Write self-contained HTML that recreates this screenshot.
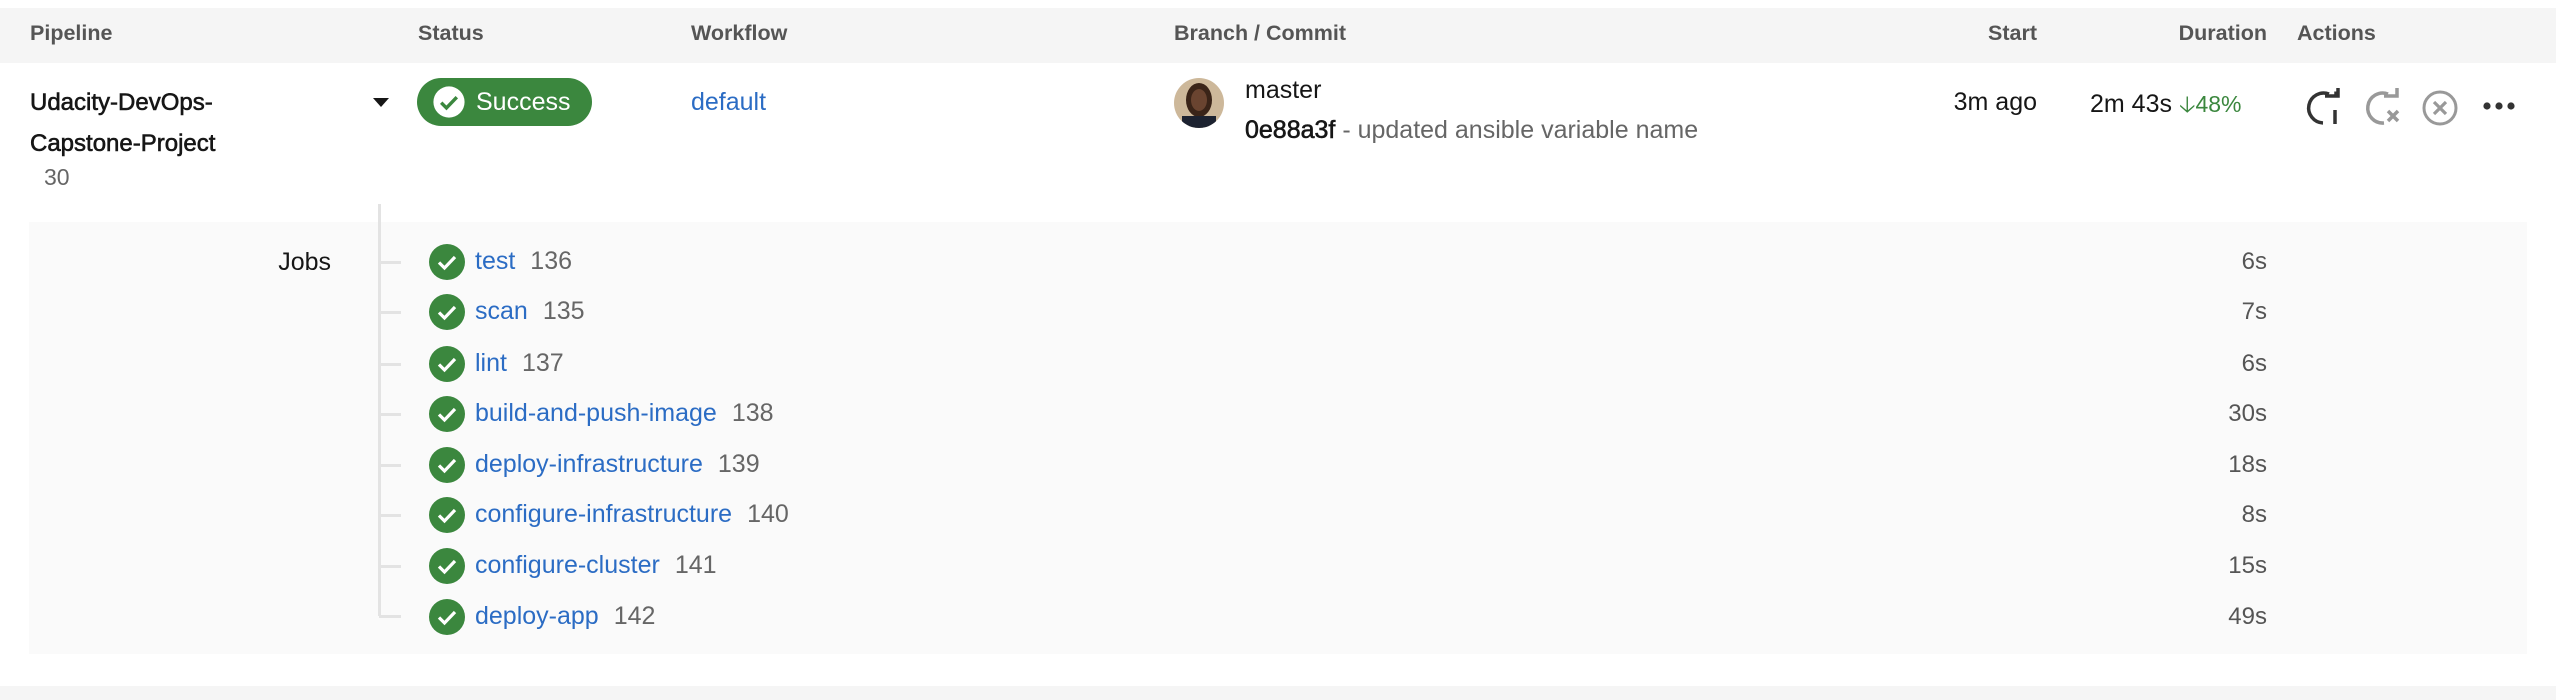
<!DOCTYPE html>
<html><head><meta charset="utf-8"><style>
*{margin:0;padding:0;box-sizing:border-box}
body{width:2556px;height:700px;background:#fff;font-family:"Liberation Sans",sans-serif;position:relative;overflow:hidden;color:#161616}
.a{position:absolute;white-space:nowrap}
.h{font-weight:bold;font-size:21.5px;color:#555;top:21px}
.blue{color:#2b6cc4}
.gray{color:#666}
.med{-webkit-text-stroke:0.6px currentColor}
.job{font-size:25px;left:475px}
.job span{color:#666;margin-left:15px}
.dur{font-size:24px;color:#555;right:289px;text-align:right}
.chk{position:absolute;left:429px;width:36px;height:36px}
.tick{position:absolute;left:379px;width:22px;height:3px;background:#e3e3e3}
</style></head><body>
<div class="a" style="left:0;top:8px;width:2556px;height:55px;background:#f5f5f5"></div>
<div class="a h" style="left:30px">Pipeline</div>
<div class="a h" style="left:418px">Status</div>
<div class="a h" style="left:691px">Workflow</div>
<div class="a h" style="left:1174px">Branch / Commit</div>
<div class="a h" style="right:519px">Start</div>
<div class="a h" style="right:289px">Duration</div>
<div class="a h" style="left:2297px">Actions</div>

<div class="a med" style="left:30px;top:82px;font-size:24px;line-height:41px">Udacity-DevOps-<br>Capstone-Project</div>
<div class="a gray" style="left:44px;top:164px;font-size:23px">30</div>
<div class="a" style="left:373px;top:98px;width:0;height:0;border-left:8px solid transparent;border-right:8px solid transparent;border-top:9px solid #161616"></div>

<div class="a" style="left:417px;top:78px;width:175px;height:48px;border-radius:24px;background:#3b873e"></div>
<svg class="a" style="left:432px;top:85px" width="34" height="34" viewBox="0 0 24 24"><circle cx="12" cy="12" r="11" fill="#fff"/><path d="M6.5 12.5l3.7 3.7 7.3-7.6" stroke="#3b873e" stroke-width="2.4" fill="none"/></svg>
<div class="a" style="left:476px;top:88px;font-size:25px;color:#fff">Success</div>

<div class="a blue" style="left:691px;top:88px;font-size:25px">default</div>

<svg class="a" style="left:1174px;top:78px" width="50" height="50"><defs><clipPath id="c"><circle cx="25" cy="25" r="25"/></clipPath></defs><g clip-path="url(#c)"><rect width="50" height="50" fill="#cdb89a"/><ellipse cx="25" cy="22" rx="13" ry="17" fill="#3a2418"/><ellipse cx="25" cy="22" rx="8" ry="11" fill="#6a4430"/><rect x="8" y="38" width="34" height="14" fill="#1c2230"/></g></svg>
<div class="a" style="left:1245px;top:76px;font-size:25px">master</div>
<div class="a" style="left:1245px;top:116px;font-size:25px"><span class="med">0e88a3f</span><span class="gray"> - updated ansible variable name</span></div>

<div class="a" style="right:519px;top:88px;font-size:25px">3m ago</div>
<div class="a" style="left:2090px;top:88px;font-size:25px">2m 43s <span style="color:#3b873e;font-size:23px">&#129123;48%</span></div>

<svg class="a" style="left:2305px;top:88px" width="40" height="38" viewBox="0 0 40 38"><path d="M24 6A15 15 0 1 0 18 35" stroke="#333" stroke-width="3.5" fill="none"/><path d="M20 8H33V-3" stroke="#333" stroke-width="3.5" fill="none"/><path d="M31 3.5V8" stroke="#333" stroke-width="3.5"/><path d="M30 22V36" stroke="#333" stroke-width="3.5"/></svg>
<svg class="a" style="left:2364px;top:88px" width="40" height="38" viewBox="0 0 40 38"><path d="M24 6A15 15 0 1 0 20 35" stroke="#999" stroke-width="3.5" fill="none"/><path d="M20 8H33V-3" stroke="#999" stroke-width="3.5" fill="none"/><path d="M24 23l10 10M34 23l-10 10" stroke="#999" stroke-width="3.5"/></svg>
<svg class="a" style="left:2422px;top:90px" width="38" height="36" viewBox="0 0 38 36"><circle cx="18" cy="18" r="16" stroke="#999" stroke-width="3" fill="none"/><path d="M12 12l12 12M24 12l-12 12" stroke="#999" stroke-width="3.2"/></svg>
<svg class="a" style="left:2483px;top:101px" width="32" height="10"><circle cx="4" cy="5" r="3.6" fill="#333"/><circle cx="16" cy="5" r="3.6" fill="#333"/><circle cx="28" cy="5" r="3.6" fill="#333"/></svg>

<div class="a" style="left:29px;top:222px;width:2498px;height:432px;background:#fafafa"></div>
<div class="a" style="left:378px;top:204px;width:3px;height:412px;background:#e3e3e3"></div>
<div class="a" style="right:2225px;top:248px;font-size:25px">Jobs</div>

<div class="tick" style="top:261px"></div>
<div class="tick" style="top:311px"></div>
<div class="tick" style="top:363px"></div>
<div class="tick" style="top:413px"></div>
<div class="tick" style="top:464px"></div>
<div class="tick" style="top:514px"></div>
<div class="tick" style="top:565px"></div>
<div class="tick" style="top:615px"></div>

<svg width="0" height="0" style="position:absolute"><defs><g id="k"><circle cx="18" cy="18" r="18" fill="#3b873e"/><path d="M10 18.5l5.5 5.5 10.5-11" stroke="#fff" stroke-width="3.2" fill="none"/></g></defs></svg>
<svg class="chk" style="top:244px"><use href="#k"/></svg>
<svg class="chk" style="top:294px"><use href="#k"/></svg>
<svg class="chk" style="top:346px"><use href="#k"/></svg>
<svg class="chk" style="top:396px"><use href="#k"/></svg>
<svg class="chk" style="top:447px"><use href="#k"/></svg>
<svg class="chk" style="top:497px"><use href="#k"/></svg>
<svg class="chk" style="top:548px"><use href="#k"/></svg>
<svg class="chk" style="top:599px"><use href="#k"/></svg>

<div class="a job blue" style="top:247px">test<span>136</span></div>
<div class="a job blue" style="top:297px">scan<span>135</span></div>
<div class="a job blue" style="top:349px">lint<span>137</span></div>
<div class="a job blue" style="top:399px">build-and-push-image<span>138</span></div>
<div class="a job blue" style="top:450px">deploy-infrastructure<span>139</span></div>
<div class="a job blue" style="top:500px">configure-infrastructure<span>140</span></div>
<div class="a job blue" style="top:551px">configure-cluster<span>141</span></div>
<div class="a job blue" style="top:602px">deploy-app<span>142</span></div>

<div class="a dur" style="top:248px">6s</div>
<div class="a dur" style="top:298px">7s</div>
<div class="a dur" style="top:350px">6s</div>
<div class="a dur" style="top:400px">30s</div>
<div class="a dur" style="top:451px">18s</div>
<div class="a dur" style="top:501px">8s</div>
<div class="a dur" style="top:552px">15s</div>
<div class="a dur" style="top:603px">49s</div>

<div class="a" style="left:0;top:686px;width:2556px;height:14px;background:#f5f5f5"></div>
</body></html>
